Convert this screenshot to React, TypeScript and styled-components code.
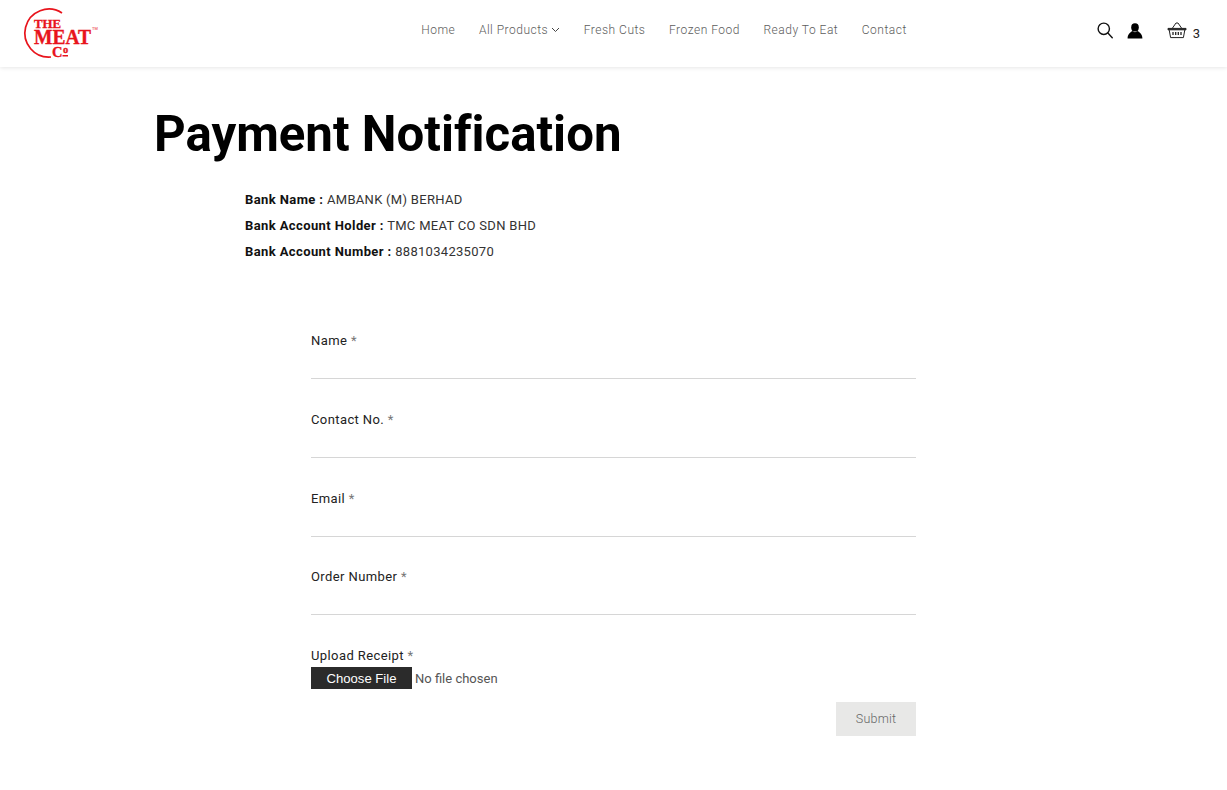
import React from 'react';
import styled, { createGlobalStyle } from 'styled-components';

const Global = createGlobalStyle`
  html, body { margin: 0; padding: 0; background: #fff; }
  body { font-family: Roboto, "Liberation Sans", sans-serif; color: #111; }
`;

const Header = styled.header`
  height: 67px;
  display: grid;
  grid-template-columns: 1fr auto 1fr;
  align-items: center;
  padding: 0 27px 0 24px;
  box-shadow: 0 1px 4px rgba(0, 0, 0, 0.1);
`;

const LogoLink = styled.a`
  display: block;
  width: 74px;
  height: 50px;
  margin-top: -1px;
`;

const Nav = styled.nav`
  display: flex;
  gap: 23.6px;
  margin: -7px 0 0 104px;
`;

const NavItem = styled.a`
  display: flex;
  align-items: center;
  gap: 3px;
  font-size: 12px;
  font-weight: 300;
  letter-spacing: 0.5px;
  color: #5c5c5c;
`;

const Tools = styled.div`
  display: flex;
  justify-content: flex-end;
  align-items: center;
  margin-top: -6px;
`;

const ToolIcon = styled.a<{ $gap: number }>`
  display: flex;
  align-items: center;
  margin-right: ${p => p.$gap}px;
`;

const CartCount = styled.span`
  font-size: 13px;
  margin-left: 6px;
  margin-top: 5px;
  color: #222;
`;

const Main = styled.main`
  padding: 38px 0 0 154px;
`;

const Title = styled.h1`
  margin: 0;
  font-size: 49.2px;
  line-height: 58px;
  font-weight: 700;
  font-variant-ligatures: none;
  color: #000;
`;

const BankInfo = styled.div`
  margin: 24px 0 0 91px;
`;

const BankLine = styled.p`
  margin: 0;
  font-size: 13px;
  line-height: 26px;
  letter-spacing: 0.3px;
  color: #333;
  strong { font-weight: 700; color: #111; letter-spacing: 0.4px; }
`;

const Form = styled.form`
  width: 605px;
  margin: 67.3px 0 0 157px;
`;

const Field = styled.div`
  height: 78.7px;
`;

const Label = styled.label`
  display: block;
  font-size: 13px;
  line-height: 18px;
  letter-spacing: 0.4px;
  color: #222;
  em { font-style: normal; color: #777; }
`;

const TextInput = styled.input`
  display: block;
  width: 100%;
  height: 29px;
  padding: 0;
  box-sizing: border-box;
  border: none;
  border-bottom: 1px solid #d6d6d6;
  background: transparent;
  &:focus { outline: none; }
`;

const FileInput = styled.input`
  display: block;
  font-family: Roboto, sans-serif;
  font-size: 13px;
  color: #555;
  height: 22px;
  margin-top: 2px;
  &::file-selector-button {
    width: 101px;
    height: 22px;
    margin-right: 3px;
    border: none;
    background: #2b2b2b;
    color: #fff;
    font-family: "Liberation Sans", sans-serif;
    font-size: 13.1px;
    padding: 0;
  }
`;

const Actions = styled.div`
  display: flex;
  justify-content: flex-end;
  margin-top: 13px;
  padding-bottom: 54px;
`;

const SubmitButton = styled.button`
  width: 80px;
  height: 34px;
  padding: 0 0 2px;
  border: none;
  background: #e8e8e7;
  color: #666;
  font-family: Roboto, sans-serif;
  font-size: 12.5px;
  font-weight: 300;
  letter-spacing: 0.2px;
`;

const LogoSvg = styled.svg`
  display: block;
  overflow: visible;
`;

const Logo = () => (
  <LogoSvg width="74" height="50" viewBox="0 0 74 50">
    <path d="M38 5 A24 24 0 1 0 27 49" fill="none" stroke="#e8141c" strokeWidth="1.7" />
    <g fill="#e8141c" stroke="#e8141c" strokeWidth="0.35" fontFamily="Liberation Serif, serif" fontWeight="700">
      <text x="10" y="20" fontSize="13.5" textLength="27" lengthAdjust="spacingAndGlyphs">THE</text>
      <text x="10" y="36" fontSize="20" textLength="57" lengthAdjust="spacingAndGlyphs">MEAT</text>
      <text x="28" y="48.5" fontSize="14.5">C<tspan dx="0.5" dy="-4" fontSize="10.5">o</tspan></text>
    </g>
    <rect x="38.5" y="47" width="5.5" height="1.5" fill="#e8141c" />
    <text x="68" y="22" fontSize="4" fill="#e8141c" fontFamily="Liberation Sans, sans-serif">TM</text>
  </LogoSvg>
);

const SearchIcon = () => (
  <svg width="16" height="17" viewBox="0 0 17 18" fill="none" stroke="#111" strokeWidth="1.5">
    <circle cx="7.2" cy="7.2" r="6" />
    <path d="M11.6 11.6 L16.2 16.6" strokeLinecap="round" />
  </svg>
);

const UserIcon = () => (
  <svg width="16" height="16" viewBox="0 0 16 16" fill="#000">
    <ellipse cx="8" cy="4.4" rx="3.8" ry="4.2" />
    <path d="M0.6 15.5 C0.6 11.5 3 9.6 5.4 8 C7 9.5 9 9.5 10.6 8 C13 9.6 15.4 11.5 15.4 15.5 Z" />
  </svg>
);

const BasketIcon = () => (
  <svg width="20" height="17" viewBox="0 0 20 17" fill="none" stroke="#222" strokeWidth="1">
    <path d="M5.5 6 L9 1 H11 L14.5 6" />
    <path d="M1 6.4 H19 V7.8 H1 Z" fill="#222" />
    <path d="M2.2 8 L3.6 15.6 H16.4 L17.8 8" />
    <path d="M6 10 V13 M8.7 10 V13 M11.3 10 V13 M14 10 V13" strokeWidth="1.3" />
  </svg>
);

const Chevron = () => (
  <svg width="9" height="6" viewBox="0 0 9 6" fill="none" stroke="#444" strokeWidth="1">
    <path d="M1 1 L4.5 4.5 L8 1" />
  </svg>
);

const fields = ['Name', 'Contact No.', 'Email', 'Order Number'];

export default function App() {
  return (
    <>
      <Global />
      <Header>
        <LogoLink><Logo /></LogoLink>
        <Nav>
          <NavItem>Home</NavItem>
          <NavItem>All Products <Chevron /></NavItem>
          <NavItem>Fresh Cuts</NavItem>
          <NavItem>Frozen Food</NavItem>
          <NavItem>Ready To Eat</NavItem>
          <NavItem>Contact</NavItem>
        </Nav>
        <Tools>
          <ToolIcon $gap={14}><SearchIcon /></ToolIcon>
          <ToolIcon $gap={24}><UserIcon /></ToolIcon>
          <ToolIcon $gap={0}><BasketIcon /></ToolIcon>
          <CartCount>3</CartCount>
        </Tools>
      </Header>
      <Main>
        <Title>Payment Notification</Title>
        <BankInfo>
          <BankLine><strong>Bank Name :</strong> AMBANK (M) BERHAD</BankLine>
          <BankLine><strong>Bank Account Holder :</strong> TMC MEAT CO SDN BHD</BankLine>
          <BankLine><strong>Bank Account Number :</strong> 8881034235070</BankLine>
        </BankInfo>
        <Form>
          {fields.map(f => (
            <Field key={f}>
              <Label>{f} <em>*</em></Label>
              <TextInput type="text" />
            </Field>
          ))}
          <Label>Upload Receipt <em>*</em></Label>
          <FileInput type="file" />
          <Actions>
            <SubmitButton type="button">Submit</SubmitButton>
          </Actions>
        </Form>
      </Main>
    </>
  );
}
